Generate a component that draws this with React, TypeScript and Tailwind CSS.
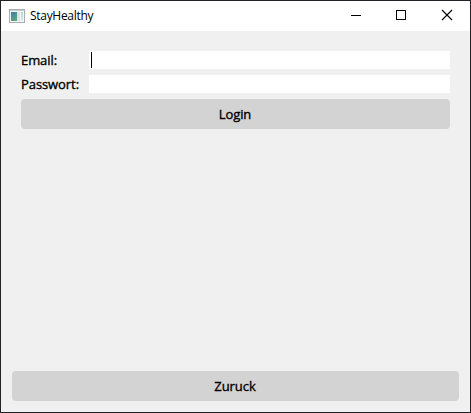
import type { ReactNode } from "react";

function AppIcon() {
  return (
    <svg width="16" height="14" viewBox="0 0 16 14" shapeRendering="crispEdges">
      <defs>
        <linearGradient id="screen" x1="0" y1="0" x2="0.5" y2="1">
          <stop offset="0" stopColor="#4577a5" />
          <stop offset="1" stopColor="#55ab80" />
        </linearGradient>
        <linearGradient id="side" x1="0" y1="0" x2="0" y2="1">
          <stop offset="0" stopColor="#b4dcc0" />
          <stop offset="1" stopColor="#e4e6ea" />
        </linearGradient>
      </defs>
      <rect width="16" height="14" fill="#a9adb2" />
      <rect x="1" y="1" width="14" height="1" fill="#c9ccd0" />
      <rect x="1" y="2" width="14" height="11" fill="#f4f5f6" />
      <rect x="2" y="3" width="6" height="9" fill="url(#screen)" />
      <rect x="8" y="3" width="3" height="9" fill="#dfe4e8" />
      <rect x="12" y="3" width="2" height="9" fill="url(#side)" />
    </svg>
  );
}

function TitleBar() {
  return (
    <header className="flex h-[30px] items-center bg-white pl-2">
      <AppIcon />
      <h1 className="ml-[5px] flex-1 font-['Open_Sans','Noto_Sans',sans-serif] text-[12px] font-normal leading-4 tracking-[-0.3px] text-black">
        StayHealthy
      </h1>
      <svg width="46" height="30" shapeRendering="crispEdges">
        <path d="M18 14.5h10" stroke="#000" />
      </svg>
      <svg width="45" height="30" shapeRendering="crispEdges">
        <rect x="17.5" y="9.5" width="9" height="9" fill="none" stroke="#000" />
      </svg>
      <svg width="46" height="30">
        <path d="M18 9l10 10M28 9l-10 10" stroke="#000" strokeWidth="1.1" />
      </svg>
    </header>
  );
}

function Field({ label, children }: { label: string; children?: ReactNode }) {
  return (
    <div className="flex h-[18px] items-center">
      <label className="w-[68px] shrink-0 whitespace-nowrap leading-[18px] [-webkit-text-stroke:0.35px_#000]">
        {label}
      </label>
      <div className="flex h-[18px] flex-1 bg-white pl-0.5 pt-px">{children}</div>
    </div>
  );
}

function Button({ text }: { text: string }) {
  return (
    <button className="flex h-[30px] w-full items-center justify-center rounded bg-[#d3d3d3] pr-px pt-0.5 [-webkit-text-stroke:0.35px_#000]">
      {text}
    </button>
  );
}

export default function App() {
  return (
    <div className="flex h-[413px] w-[471px] flex-col border border-[#222126] bg-[#f0f0f0] font-['Open_Sans','Noto_Sans',sans-serif] text-[13px] font-normal tracking-[-0.08px] text-black">
      <TitleBar />
      <main className="flex flex-1 flex-col justify-between pb-[11px] pt-5">
        <section className="flex flex-col gap-1.5 px-5">
          <Field label="Email:">
            <span className="h-4 w-px bg-black" />
          </Field>
          <Field label="Passwort:" />
          <Button text="Login" />
        </section>
        <div className="px-[11px]">
          <Button text="Zuruck" />
        </div>
      </main>
    </div>
  );
}
